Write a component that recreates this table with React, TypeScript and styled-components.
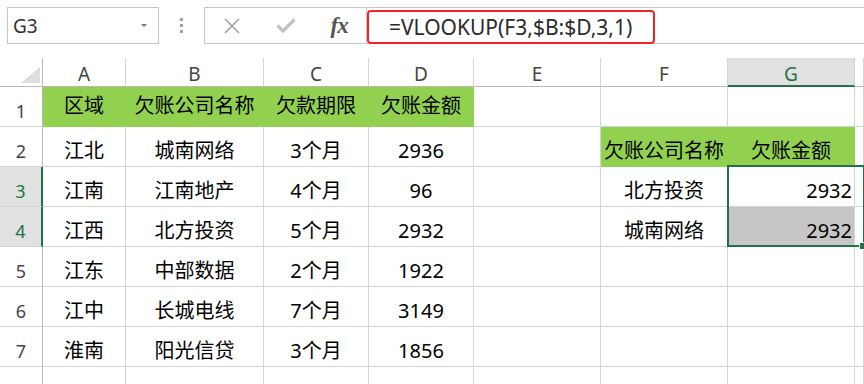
import { Fragment } from "react";
import styled, { createGlobalStyle } from "styled-components";

const EXCEL_GREEN = "#217346";
const FILL_GREEN = "#92d050";
const GRID = "#d4d4d4";
const HEAD_LINE = "#b8b8b8";
const SHADE = "#c6c6c6";

const GlobalStyle = createGlobalStyle`
  html, body {
    margin: 0;
    padding: 0;
    background: #fff;
    overflow: hidden;
  }
  body {
    font-family: "Noto Sans", "Noto Sans CJK SC", sans-serif;
    color: #000;
  }
`;

// ---- formula bar ----

const FormulaBar = styled.div`
  display: flex;
  align-items: flex-start;
  height: 44px;
  padding: 7px 0 0 7px;
  box-sizing: border-box;
`;

const NameBox = styled.div`
  display: flex;
  align-items: center;
  justify-content: space-between;
  width: 152px;
  height: 37px;
  box-sizing: border-box;
  border: 1px solid #c6c6c6;
  padding: 0 11px 0 5px;
  font-size: 19px;
  color: #333;
`;

const DropArrow = styled.span`
  width: 0;
  height: 0;
  border-left: 3px solid transparent;
  border-right: 3px solid transparent;
  border-top: 3px solid #7a7a7a;
`;

const Grip = styled.div`
  display: flex;
  flex-direction: column;
  align-items: center;
  justify-content: center;
  gap: 3px;
  width: 45px;
  height: 37px;
  span {
    width: 3px;
    height: 3px;
    background: #a0a0a0;
  }
`;

const ButtonGroup = styled.div`
  display: flex;
  align-items: center;
  width: 163px;
  height: 37px;
  box-sizing: border-box;
  border: 1px solid #c6c6c6;
`;

const BarButton = styled.div`
  display: flex;
  align-items: center;
  justify-content: center;
  width: 54px;
  height: 100%;
`;

const FxLabel = styled.span`
  font-family: "Liberation Serif", serif;
  font-style: italic;
  font-weight: bold;
  font-size: 23px;
  color: #555;
  letter-spacing: -1px;
`;

const FormulaInput = styled.div`
  flex: 1;
  height: 37px;
  box-sizing: border-box;
  border-top: 1px solid #c6c6c6;
  border-bottom: 1px solid #c6c6c6;
`;

const FormulaText = styled.div`
  display: flex;
  align-items: center;
  width: 288px;
  height: 34px;
  margin-top: 2px;
  box-sizing: border-box;
  padding-left: 20px;
  border: 2px solid #f02424;
  border-radius: 4px;
  font-size: 21px;
  color: #2a2a2a;
  white-space: nowrap;
`;

// ---- sheet ----

const Sheet = styled.div`
  position: relative;
  display: grid;
  grid-template-columns: 43px 83px 138px 105px 105px 127px 127px 127px 1fr;
  grid-template-rows: 29px repeat(8, 40px);
  margin-top: 14px;
`;

const Corner = styled.div`
  display: flex;
  align-items: flex-end;
  justify-content: flex-end;
  box-sizing: border-box;
  padding: 0 2px 3px 0;
  border-right: 1px solid ${HEAD_LINE};
  border-bottom: 1px solid ${HEAD_LINE};
`;

const ColHead = styled.div<{ $active?: boolean }>`
  display: flex;
  align-items: flex-end;
  justify-content: center;
  box-sizing: border-box;
  border-right: 1px solid ${GRID};
  border-bottom: ${(p) => (p.$active ? `2px solid ${EXCEL_GREEN}` : `1px solid ${HEAD_LINE}`)};
  padding-bottom: ${(p) => (p.$active ? 0 : 1)}px;
  background: ${(p) => (p.$active ? "#e1e1e1" : "#fff")};
  color: ${(p) => (p.$active ? EXCEL_GREEN : "#444")};
  font-size: 19px;
  line-height: 22px;
`;

const RowHead = styled.div<{ $active?: boolean }>`
  display: flex;
  align-items: flex-end;
  justify-content: center;
  box-sizing: border-box;
  padding-bottom: 1px;
  border-right: ${(p) => (p.$active ? `2px solid ${EXCEL_GREEN}` : `1px solid ${HEAD_LINE}`)};
  border-bottom: 1px solid ${GRID};
  background: ${(p) => (p.$active ? "#e1e1e1" : "#fff")};
  color: ${(p) => (p.$active ? EXCEL_GREEN : "#444")};
  font-size: 18px;
  line-height: 28px;
`;

const Cell = styled.div<{ $fill?: string; $right?: boolean; $middle?: boolean }>`
  display: flex;
  align-items: ${(p) => (p.$middle ? "center" : "flex-end")};
  justify-content: ${(p) => (p.$right ? "flex-end" : "center")};
  box-sizing: border-box;
  padding: 0 2px 1px;
  border-right: 1px solid ${(p) => (p.$fill === FILL_GREEN ? FILL_GREEN : GRID)};
  border-bottom: 1px solid ${(p) => (p.$fill === FILL_GREEN ? FILL_GREEN : GRID)};
  background: ${(p) => p.$fill ?? "#fff"};
  font-size: 20px;
  line-height: 28px;
  white-space: nowrap;
`;

// selection frame drawn over G3:G4
const Selection = styled.div`
  position: absolute;
  grid-column: 8;
  grid-row: 4 / span 2;
  inset: -2px -1px 0 -1px;
  border: 2px solid ${EXCEL_GREEN};
  pointer-events: none;
`;

const FillHandle = styled.div`
  position: absolute;
  right: -4px;
  bottom: -5px;
  width: 6px;
  height: 6px;
  background: ${EXCEL_GREEN};
  border: 1px solid #fff;
`;

const QuickAnalysis = styled.div`
  position: absolute;
  left: calc(100% + 4px);
  top: calc(100% + 5px);
  width: 22px;
  height: 32px;
  box-sizing: border-box;
  border: 1px solid ${EXCEL_GREEN};
  background: #fff;
  &::before {
    content: "";
    position: absolute;
    left: 1px;
    top: 8px;
    width: 2px;
    height: 3px;
    background: #f0b45a;
  }
`;

type Row = {
  cells: string[];
  fills?: (string | undefined)[];
  right?: boolean[];
  middle?: boolean;
};

const rows: Row[] = [
  {
    cells: ["区域", "欠账公司名称", "欠款期限", "欠账金额", "", "", ""],
    fills: [FILL_GREEN, FILL_GREEN, FILL_GREEN, FILL_GREEN],
    middle: true,
  },
  {
    cells: ["江北", "城南网络", "3个月", "2936", "", "欠账公司名称", "欠账金额"],
    fills: [undefined, undefined, undefined, undefined, undefined, FILL_GREEN, FILL_GREEN],
  },
  {
    cells: ["江南", "江南地产", "4个月", "96", "", "北方投资", "2932"],
    right: [false, false, false, false, false, false, true],
  },
  {
    cells: ["江西", "北方投资", "5个月", "2932", "", "城南网络", "2932"],
    fills: [undefined, undefined, undefined, undefined, undefined, undefined, SHADE],
    right: [false, false, false, false, false, false, true],
  },
  { cells: ["江东", "中部数据", "2个月", "1922", "", "", ""] },
  { cells: ["江中", "长城电线", "7个月", "3149", "", "", ""] },
  { cells: ["淮南", "阳光信贷", "3个月", "1856", "", "", ""] },
  { cells: ["", "", "", "", "", "", ""] },
];

const columns = ["A", "B", "C", "D", "E", "F", "G", ""];

const App = () => {
  return (
    <>
      <GlobalStyle />
      <FormulaBar>
        <NameBox>
          <span>G3</span>
          <DropArrow />
        </NameBox>
        <Grip>
          <span />
          <span />
          <span />
        </Grip>
        <ButtonGroup>
          {/* cancel */}
          <BarButton>
            <svg width="18" height="16" viewBox="0 0 18 16">
              <path d="M2 1 L16 15 M16 1 L2 15" stroke="#a3a3a3" strokeWidth="1.6" fill="none" />
            </svg>
          </BarButton>
          {/* enter */}
          <BarButton>
            <svg width="20" height="15" viewBox="0 0 20 15">
              <path d="M1.5 7.5 L7 13 L18.5 1.5" stroke="#c2c2c2" strokeWidth="3.2" fill="none" />
            </svg>
          </BarButton>
          <BarButton>
            <FxLabel>fx</FxLabel>
          </BarButton>
        </ButtonGroup>
        <FormulaInput>
          <FormulaText>=VLOOKUP(F3,$B:$D,3,1)</FormulaText>
        </FormulaInput>
      </FormulaBar>

      <Sheet>
        <Corner>
          <svg width="19" height="16" viewBox="0 0 19 16">
            <polygon points="19,0 19,16 0,16" fill="#dedede" />
          </svg>
        </Corner>
        {columns.map((c, i) => (
          <ColHead key={i} $active={c === "G"}>
            {c}
          </ColHead>
        ))}

        {rows.map((row, r) => (
          <Fragment key={r}>
            {/* the last row's number sits below the window edge */}
            <RowHead $active={r === 2 || r === 3}>{r < 7 ? r + 1 : ""}</RowHead>
            {row.cells.map((text, c) => (
              <Cell
                key={c}
                $fill={row.fills?.[c]}
                $right={row.right?.[c]}
                $middle={row.middle}
              >
                {text}
              </Cell>
            ))}
            <Cell />
          </Fragment>
        ))}

        <Selection>
          <FillHandle />
          <QuickAnalysis />
        </Selection>
      </Sheet>
    </>
  );
};

export default App;
